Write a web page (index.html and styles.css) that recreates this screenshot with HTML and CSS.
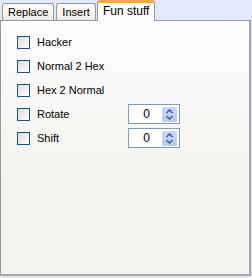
FILE: index.html
```html
<!DOCTYPE html>
<html lang="en">
<head>
  <meta charset="UTF-8">
  <title>Fun stuff</title>
  <link rel="stylesheet" href="styles.css">
</head>
<body>
  <div class="tabs">
    <div class="tab">Replace</div>
    <div class="tab">Insert</div>
    <div class="tab active">Fun stuff</div>
  </div>

  <div class="panel">
    <label class="row"><span class="check"></span>Hacker</label>
    <label class="row"><span class="check"></span>Normal 2 Hex</label>
    <label class="row"><span class="check"></span>Hex 2 Normal</label>
    <div class="row">
      <label class="opt"><span class="check"></span>Rotate</label>
      <div class="spin">
        <span class="val">0</span>
        <span class="arrows">
          <svg width="11" height="15" viewBox="0 0 11 15"><path d="M2.5 6 L5.5 3 L8.5 6" fill="none" stroke="#4d6185" stroke-width="1.6"/><path d="M2.5 9 L5.5 12 L8.5 9" fill="none" stroke="#4d6185" stroke-width="1.6"/></svg>
        </span>
      </div>
    </div>
    <div class="row">
      <label class="opt"><span class="check"></span>Shift</label>
      <div class="spin">
        <span class="val">0</span>
        <span class="arrows">
          <svg width="11" height="15" viewBox="0 0 11 15"><path d="M2.5 6 L5.5 3 L8.5 6" fill="none" stroke="#4d6185" stroke-width="1.6"/><path d="M2.5 9 L5.5 12 L8.5 9" fill="none" stroke="#4d6185" stroke-width="1.6"/></svg>
        </span>
      </div>
    </div>
  </div>
</body>
</html>
```

FILE: styles.css
```css
body {
  margin: 0;
  width: 252px;
  height: 278px;
  background: #e4e8fb;
  font-family: "Liberation Sans", Arial, sans-serif;
  font-size: 11px;
  color: #000;
}

.tabs {
  display: flex;
  align-items: flex-end;
  height: 20px;
  padding-left: 2px;
  gap: 2px;
  position: relative;
  z-index: 1;
}

.tab {
  height: 17px;
  padding: 0 5px;
  line-height: 16px;
  border: 1px solid #919b9c;
  border-bottom: none;
  border-radius: 3px 3px 0 0;
  background: linear-gradient(#fefefe, #ecebe6);
  box-sizing: border-box;
}

.tab.active {
  height: 21px;
  margin-bottom: -1px;
  margin-left: -1px;
  padding: 0 5px;
  background: #fcfcfe;
  border-top: 3px solid #f3a93b;
  line-height: 16px;
  font-size: 12px;
}

.panel {
  width: 251px;
  height: 256px;
  box-sizing: border-box;
  border: 1px solid #919b9c;
  border-right: 2px solid #a7a6aa;
  border-bottom: 2px solid #a7a6aa;
  background: linear-gradient(#fcfcfe, #f4f3ee 60%);
  padding: 14px 0 0 16px;
  display: flex;
  flex-direction: column;
  gap: 10px;
}

.row, .opt {
  display: flex;
  align-items: center;
  height: 14px;
}

.check {
  width: 11px;
  height: 11px;
  border: 1px solid #1c5180;
  background: linear-gradient(135deg, #dcdcd6, #fff);
  margin-right: 7px;
}

.opt {
  width: 111px;
}

.spin {
  width: 52px;
  height: 20px;
  box-sizing: border-box;
  border: 1px solid #7f9db9;
  background: #fff;
  display: flex;
  align-items: center;
}

.val {
  flex: 1;
  text-align: center;
  padding-left: 2px;
  font-size: 12px;
}

.arrows {
  width: 15px;
  height: 15px;
  margin-right: 2px;
  background: linear-gradient(#cdd9fb, #b4c8f5);
  border-radius: 2px;
  display: flex;
  justify-content: center;
}
```
